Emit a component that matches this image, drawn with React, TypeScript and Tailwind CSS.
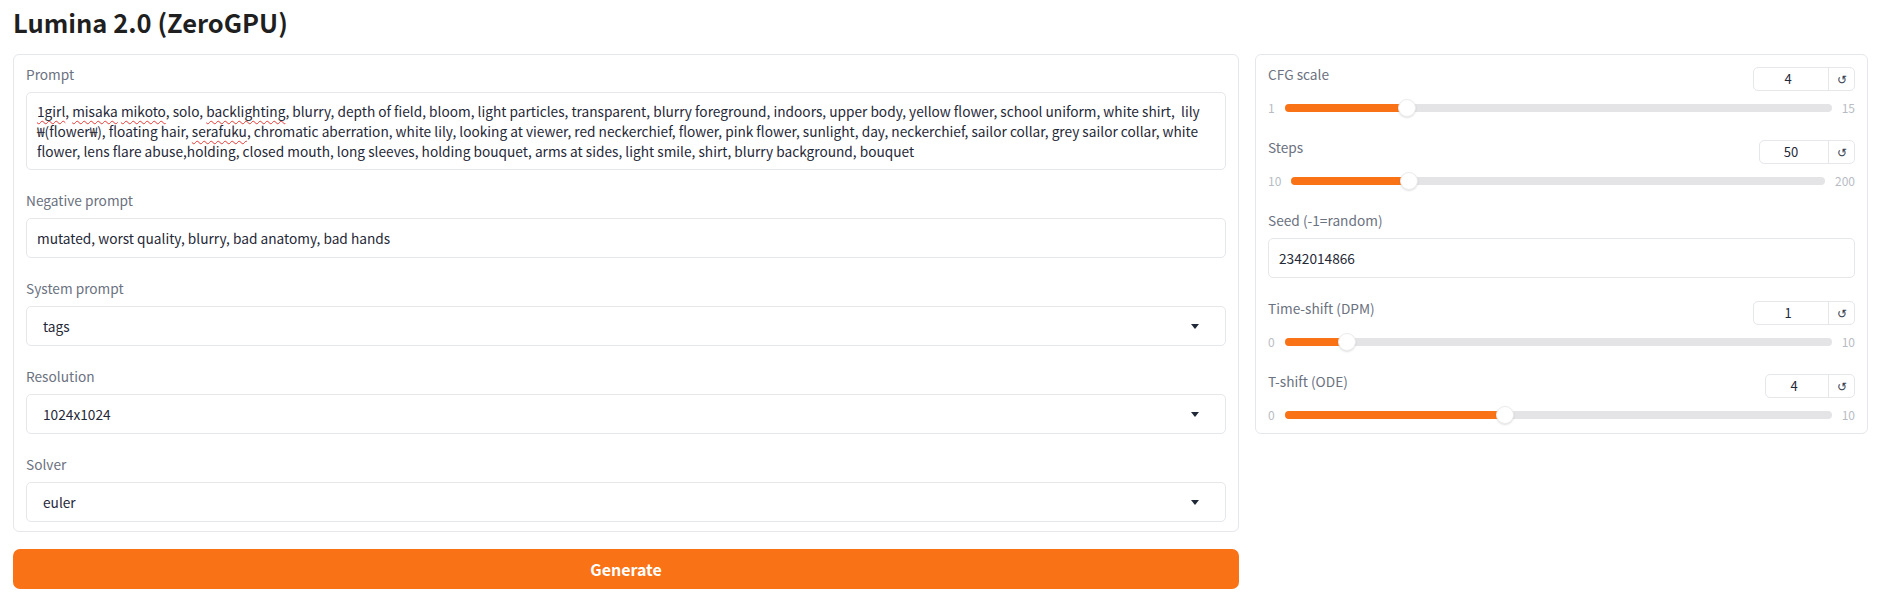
import { ReactNode } from "react"

const flagged = "underline decoration-wavy decoration-[#e53935] decoration-1 underline-offset-[3px]"

function Label({ children }: { children: ReactNode }) {
  return <div className="text-[13.7px] leading-[20px] text-[#6b7280]">{children}</div>
}

function TextBox({ value }: { value: string }) {
  return (
    <div className="flex h-10 items-center rounded-[5px] border border-[#e5e7eb] px-[10px] text-[13.7px] text-[#1f2937]">
      {value}
    </div>
  )
}

function Dropdown({ value }: { value: string }) {
  return (
    <div className="flex h-10 items-center justify-between rounded-[5px] border border-[#e5e7eb] pl-[16px] pr-[26px] text-[13.7px] text-[#1f2937]">
      <span>{value}</span>
      <svg width="8" height="5" viewBox="0 0 8 5">
        <polygon points="0,0 8,0 4,5" fill="#1f2937" />
      </svg>
    </div>
  )
}

function Field({ label, children }: { label: string; children: ReactNode }) {
  return (
    <div className="flex flex-col gap-2">
      <Label>{label}</Label>
      {children}
    </div>
  )
}

function SliderField({
  label,
  value,
  min,
  max,
  boxWidth,
}: {
  label: string
  value: number
  min: number
  max: number
  boxWidth: string
}) {
  const frac = (value - min) / (max - min)
  const pos = `calc(9px + ${frac} * (100% - 18px))`
  return (
    <div className="flex flex-col">
      <div className="flex items-start justify-between">
        <Label>{label}</Label>
        <div className={`mt-[3px] flex h-6 rounded-[5px] border border-[#e5e7eb] ${boxWidth}`}>
          <div className="flex flex-1 items-center justify-center pr-[6px] text-[13px] text-[#1f2937]">{value}</div>
          <div className="flex w-[26px] items-center justify-center border-l border-[#e5e7eb] text-[12px] text-[#374151]">
            ↺
          </div>
        </div>
      </div>
      <div className="mt-[8px] flex h-[18px] items-center gap-[10px] text-[12px] text-[#b8bcc4]">
        <span>{min}</span>
        <div className="relative flex h-[18px] min-w-0 flex-1 items-center">
          <div className="h-[8px] w-full rounded-full bg-[#e4e4e7]" />
          <div className="absolute left-0 h-[8px] rounded-l-full bg-[#f97316]" style={{ width: pos }} />
          <div
            className="absolute h-[18px] w-[18px] -translate-x-1/2 rounded-full border border-[#ececec] bg-white shadow-[0_1px_2px_rgba(0,0,0,0.12)]"
            style={{ left: pos }}
          />
        </div>
        <span>{max}</span>
      </div>
    </div>
  )
}

export default function App() {
  return (
    <div className="min-h-screen bg-white px-[13px] font-['Noto_Sans_CJK_KR','Noto_Sans',sans-serif]">
      <h1 className="pt-[3px] text-[25.5px] font-bold leading-[38px] text-[#1f1f1f]">Lumina 2.0 (ZeroGPU)</h1>

      <div className="mt-[13px] grid grid-cols-[minmax(0,2fr)_minmax(0,1fr)] items-start gap-4">
        {/* Left column */}
        <div className="flex min-w-0 flex-col gap-[17px]">
          <div className="flex flex-col gap-5 rounded-[6px] border border-[#e5e7eb] px-3 py-[9px]">
            <Field label="Prompt">
              <div className="whitespace-pre-wrap rounded-[5px] border border-[#e5e7eb] px-[10px] py-[8px] text-[13.7px] leading-[20px] text-[#1f2937]">
                <span className={flagged}>1girl</span>, <span className={flagged}>misaka</span>{" "}
                <span className={flagged}>mikoto</span>, solo, <span className={flagged}>backlighting</span>, blurry,
                depth of field, bloom, light particles, transparent, blurry foreground, indoors, upper body, yellow
                flower, school uniform, white shirt,{"  "}lily <span className="whitespace-nowrap">₩(flower₩),</span>{" "}
                floating hair, <span className={flagged}>serafuku</span>, chromatic aberration, white lily, looking at
                viewer, red neckerchief, flower, pink flower, sunlight, day, neckerchief, sailor collar, grey sailor
                collar, white flower, lens flare abuse,holding, closed mouth, long sleeves, holding bouquet, arms at
                sides, light smile, shirt, blurry background, bouquet
              </div>
            </Field>
            <Field label="Negative prompt">
              <TextBox value="mutated, worst quality, blurry, bad anatomy, bad hands" />
            </Field>
            <Field label="System prompt">
              <Dropdown value="tags" />
            </Field>
            <Field label="Resolution">
              <Dropdown value="1024x1024" />
            </Field>
            <Field label="Solver">
              <Dropdown value="euler" />
            </Field>
          </div>
          <button className="h-10 rounded-[7px] bg-[#f97316] text-[16px] font-bold text-white">Generate</button>
        </div>

        {/* Right column */}
        <div className="flex min-w-0 flex-col gap-5 rounded-[6px] border border-[#e5e7eb] px-3 py-[9px]">
          <SliderField label="CFG scale" value={4} min={1} max={15} boxWidth="w-[102px]" />
          <SliderField label="Steps" value={50} min={10} max={200} boxWidth="w-[96px]" />
          <Field label="Seed (-1=random)">
            <TextBox value="2342014866" />
          </Field>
          <SliderField label="Time-shift (DPM)" value={1} min={0} max={10} boxWidth="w-[102px]" />
          <SliderField label="T-shift (ODE)" value={4} min={0} max={10} boxWidth="w-[90px]" />
        </div>
      </div>
    </div>
  )
}
